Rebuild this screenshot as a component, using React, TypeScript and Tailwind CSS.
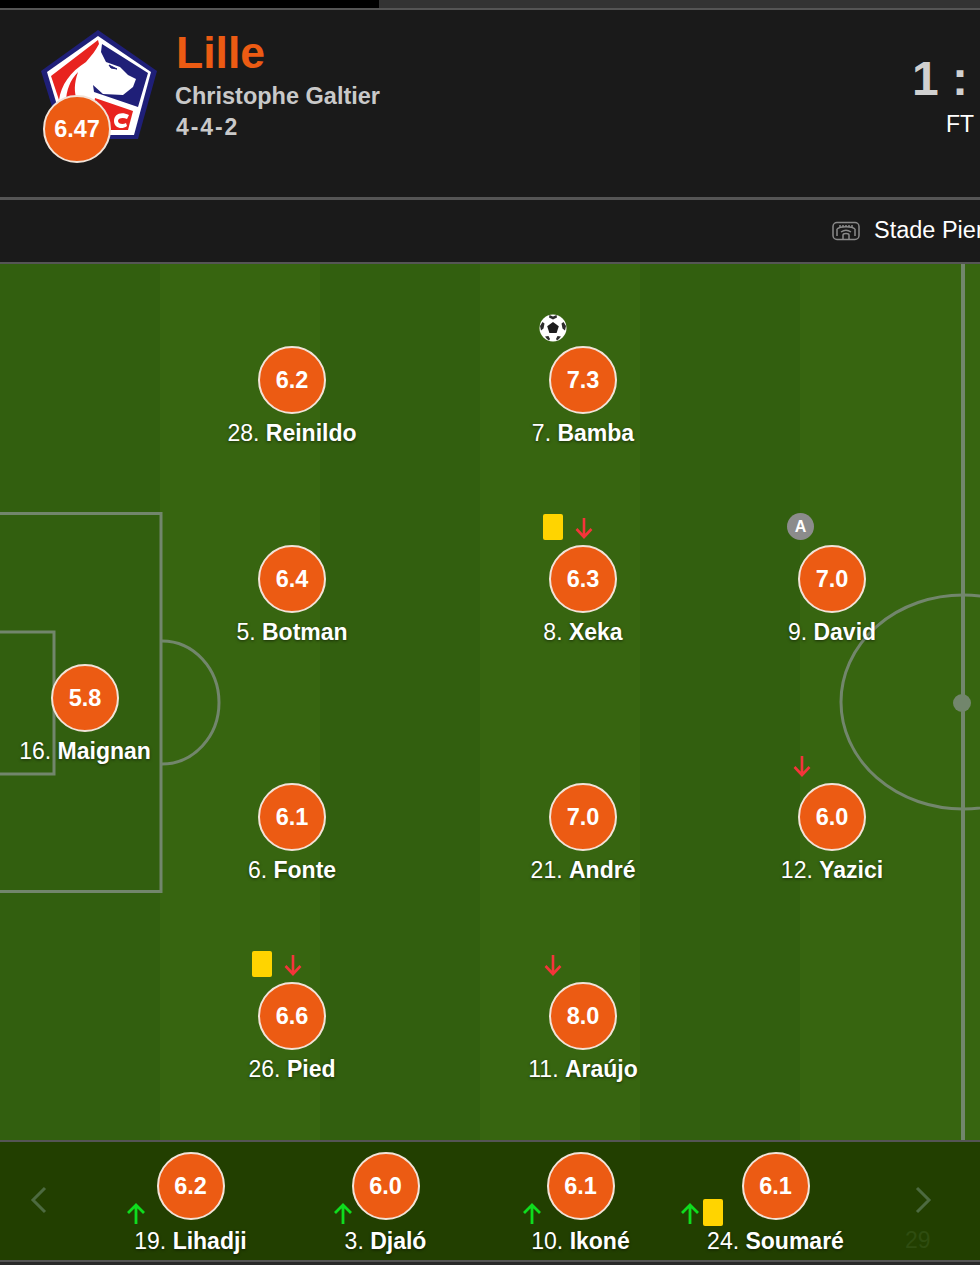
const starters = [
  { x: 85, y: 698, rating: '5.8', num: '16.', name: 'Maignan', extras: [] },
  { x: 292, y: 380, rating: '6.2', num: '28.', name: 'Reinildo', extras: [] },
  { x: 292, y: 579, rating: '6.4', num: '5.', name: 'Botman', extras: [] },
  { x: 292, y: 817, rating: '6.1', num: '6.', name: 'Fonte', extras: [] },
  { x: 292, y: 1016, rating: '6.6', num: '26.', name: 'Pied', extras: ['card-left', 'out-right'] },
  { x: 583, y: 380, rating: '7.3', num: '7.', name: 'Bamba', extras: ['goal'] },
  { x: 583, y: 579, rating: '6.3', num: '8.', name: 'Xeka', extras: ['card-left', 'out-right'] },
  { x: 583, y: 817, rating: '7.0', num: '21.', name: 'André', extras: [] },
  { x: 583, y: 1016, rating: '8.0', num: '11.', name: 'Araújo', extras: ['out-left'] },
  { x: 832, y: 579, rating: '7.0', num: '9.', name: 'David', extras: ['captain'] },
  { x: 832, y: 817, rating: '6.0', num: '12.', name: 'Yazici', extras: ['out-left'] },
];

const subs = [
  { rating: '6.2', num: '19.', name: 'Lihadji', card: false, arrow: 'left-[33px]' },
  { rating: '6.0', num: '3.', name: 'Djaló', card: false, arrow: 'left-[45px]' },
  { rating: '6.1', num: '10.', name: 'Ikoné', card: false, arrow: 'left-[39px]' },
  { rating: '6.1', num: '24.', name: 'Soumaré', card: true, arrow: 'left-[2px]' },
];

function Rating({ value }: { value: string }) {
  return (
    <div className="flex h-[68px] w-[68px] items-center justify-center rounded-full border-2 border-[#f2e3d8] bg-[#ec5b13] pt-px text-[23.5px] font-bold text-white">
      {value}
    </div>
  );
}

function ArrowDown({ className }: { className: string }) {
  return (
    <svg className={className} width="20" height="24" viewBox="0 0 20 24" fill="none" stroke="#f5343a" strokeWidth="2.6">
      <path d="M10 2v19M2.5 13l7.500 8 7.500-8" />
    </svg>
  );
}

function ArrowUp({ className }: { className: string }) {
  return (
    <svg className={className} width="20" height="24" viewBox="0 0 20 24" fill="none" stroke="#0fdc1e" strokeWidth="2.8">
      <path d="M10 24V5M2 13l8-8 8 8" />
    </svg>
  );
}

function Ball({ className }: { className: string }) {
  return (
    <svg className={className} width="28" height="28" viewBox="0 0 28 28">
      <circle cx="14" cy="14" r="13.5" fill="#fff" />
      <path d="M14 8l5.800 4.200-2.200 6.800h-7.200l-2.200-6.800z" fill="#1c1c1c" />
      <path d="M10.500 1l3.500 1.500L17.500 1l.5 2.500-4 2-4-2zM1 12l2.500-4 2 1.500-1 5-2.500 2zM27 12l-2.500-4-2 1.500 1 5 2.500 2zM6 22.500l3.500-.5 1.500 3-1 1.500a13.500 13.500 0 0 1-4-4zM22 22.500l-3.500-.5-1.500 3 1 1.500a13.500 13.500 0 0 0 4-4z" fill="#2c2c2c" />
    </svg>
  );
}

function Extra({ kind }: { kind: string }) {
  if (kind === 'goal') return <Ball className="absolute left-[-10px] top-[-32px]" />;
  if (kind === 'card-left') return <div className="absolute left-[-6px] top-[-31px] h-[26px] w-[20px] rounded-[2px] bg-[#ffd400]" />;
  if (kind === 'out-right') return <ArrowDown className="absolute left-[25px] top-[-29px]" />;
  if (kind === 'out-left') return <ArrowDown className="absolute left-[-6px] top-[-29px]" />;
  return (
    <div className="absolute left-[-11px] top-[-32px] flex h-[27px] w-[27px] items-center justify-center rounded-full bg-[#8c8c8c] text-[16px] font-bold text-white">
      A
    </div>
  );
}

function PlayerName({ num, name }: { num: string; name: string }) {
  return (
    <div className="whitespace-nowrap text-[23px] leading-[28px] text-white [text-shadow:0_1px_3px_rgba(0,0,0,0.55)]">
      {num} <span className="font-bold">{name}</span>
    </div>
  );
}

function LilleLogo() {
  return (
    <svg className="absolute left-[41px] top-[20px]" width="116" height="112" viewBox="41 30 116 112">
      <path d="M98 30l59 41-19 68H62L41 71z" fill="#1f1f78" />
      <path d="M98 36l53 36-17 63H66L47 72z" fill="#fff" />
      <path d="M98 40L51 76l8 24c2-15 11-28 27-38 6-7 10-12 13-18z" fill="#e8231f" />
      <path d="M66 102c0-11 4-22 12-30-4 12-4 20-1 28z" fill="#e8231f" />
      <path d="M102 44l46 29-10 34-44-15-1-7 10 9 20 1 10-8 3-8-8-4-8-8-14-5-5-10z" fill="#1f1f78" />
      <path d="M109 65l8 4-6-1z" fill="#1f1f78" stroke="#1f1f78" />
      <path d="M95 98l38 13-5 19H90z" fill="#e8231f" />
      <path d="M129 115c-8-4-15-1-15 6s8 9 13 5l-1-3c-3 2-8 1-8-2s5-4 9-2z" fill="#fff" />
    </svg>
  );
}

function StadiumIcon() {
  return (
    <svg className="shrink-0" width="28" height="20" viewBox="0 0 28 20" fill="none" stroke="#8a8a8a" strokeWidth="1.5">
      <rect x="1" y="1.500" width="26" height="17" rx="4" />
      <path d="M5 8c3-3 15-3 18 0M5 8v7M23 8v7M9 11c3-2 7-2 10 0M11 18v-4c0-2 6-2 6 0v4" />
      <path d="M7 5h14" strokeDasharray="2 1" />
    </svg>
  );
}

function PitchMarkings() {
  return (
    <svg className="absolute inset-0" width="980" height="876" viewBox="0 264 980 876" fill="none" stroke="#72866c" strokeWidth="3">
      <rect x="-5" y="513.500" width="166" height="378" />
      <rect x="-5" y="632" width="59" height="142" />
      <path d="M162 641a57 61.500 0 0 1 0 123" />
      <ellipse cx="963" cy="702" rx="122" ry="107" />
      <path d="M963 264v876" strokeWidth="4" />
      <circle cx="962" cy="703" r="9" fill="#72866c" stroke="none" />
    </svg>
  );
}

export default function App() {
  return (
    <div className="h-[1265px] w-[980px] overflow-hidden bg-[#2a2a2a] font-['Liberation_Sans',Arial,sans-serif]">
      <div className="flex h-2 bg-[#333333]">
        <div className="w-[379px] bg-black" />
      </div>

      <header className="relative flex h-[192px] items-start border-t-2 border-b-[3px] border-[#555555] bg-[#1a1a1a]">
        <LilleLogo />
        <div className="absolute left-[43px] top-[85px]">
          <Rating value="6.47" />
        </div>
        <div className="ml-[176px] mt-[18px] flex-1">
          <div className="text-[44.500px] font-bold leading-[50px] text-[#ec5b13]">Lille</div>
          <div className="-ml-px mt-[3px] whitespace-nowrap text-[23.500px] font-bold leading-[30px] text-[#c9c9c9]">Christophe Galtier</div>
          <div className="mt-[1px] text-[23px] font-bold leading-[30px] tracking-[1.900px] text-[#c9c9c9]">4-4-2</div>
        </div>
        <div className="mt-[41px] w-[68px] shrink-0 whitespace-nowrap">
          <div className="text-[48px] font-bold leading-[56px] text-[#d0d0d0]">1 :</div>
          <div className="ml-[34px] mt-[3px] text-[23px] leading-[28px] text-white">FT</div>
        </div>
      </header>

      <div className="flex h-[62px] items-center justify-end overflow-hidden whitespace-nowrap bg-[#1a1a1a]">
        <div className="flex w-[148px] shrink-0 items-center gap-[14px]">
          <StadiumIcon />
          <span className="text-[23.500px] text-white">Stade Pierre-Mauroy</span>
        </div>
      </div>

      <main className="relative h-[878px] border-t-2 border-[#555555] bg-[#325f0f]">
        <div className="flex h-[876px]">
          <div className="w-[160px] bg-[#325f0f]" />
          <div className="w-[160px] bg-[#376510]" />
          <div className="w-[160px] bg-[#325f0f]" />
          <div className="w-[160px] bg-[#376510]" />
          <div className="w-[160px] bg-[#325f0f]" />
          <div className="w-[180px] bg-[#376510]" />
        </div>
        <PitchMarkings />
        {starters.map((p) => (
          <div
            key={p.name}
            className="absolute flex w-[68px] flex-col items-center"
            style={{ left: p.x - 34, top: p.y - 298 }}
          >
            {p.extras.map((kind) => (
              <Extra key={kind} kind={kind} />
            ))}
            <Rating value={p.rating} />
            <div className="mt-[5px]">
              <PlayerName num={p.num} name={p.name} />
            </div>
          </div>
        ))}
      </main>

      <section className="relative flex h-[122px] items-start border-y-2 border-[#555555] bg-[#223f00]">
        <svg className="absolute left-[30px] top-[44px]" width="18" height="28" viewBox="0 0 18 28" fill="none" stroke="#4d6a40" strokeWidth="3">
          <path d="M15 2L3 14l12 12" />
        </svg>
        <div className="ml-[93px] flex pt-[10px]">
          {subs.map((s) => (
            <div key={s.num} className="relative flex w-[195px] flex-col items-center">
              <Rating value={s.rating} />
              <ArrowUp className={`absolute top-[48px] ${s.arrow}`} />
              {s.card && <div className="absolute left-[25px] top-[47px] h-[27px] w-[20px] rounded-[2px] bg-[#ffd400]" />}
              <div className="mt-[7px]">
                <PlayerName num={s.num} name={s.name} />
              </div>
            </div>
          ))}
        </div>
        <svg className="absolute left-[914px] top-[44px]" width="18" height="28" viewBox="0 0 18 28" fill="none" stroke="#4d6a40" strokeWidth="3">
          <path d="M3 2l12 12L3 26" />
        </svg>
        <div className="absolute left-[905px] top-[84px] text-[23px] leading-[28px] text-[#2f4d10]">29</div>
      </section>
    </div>
  );
}
